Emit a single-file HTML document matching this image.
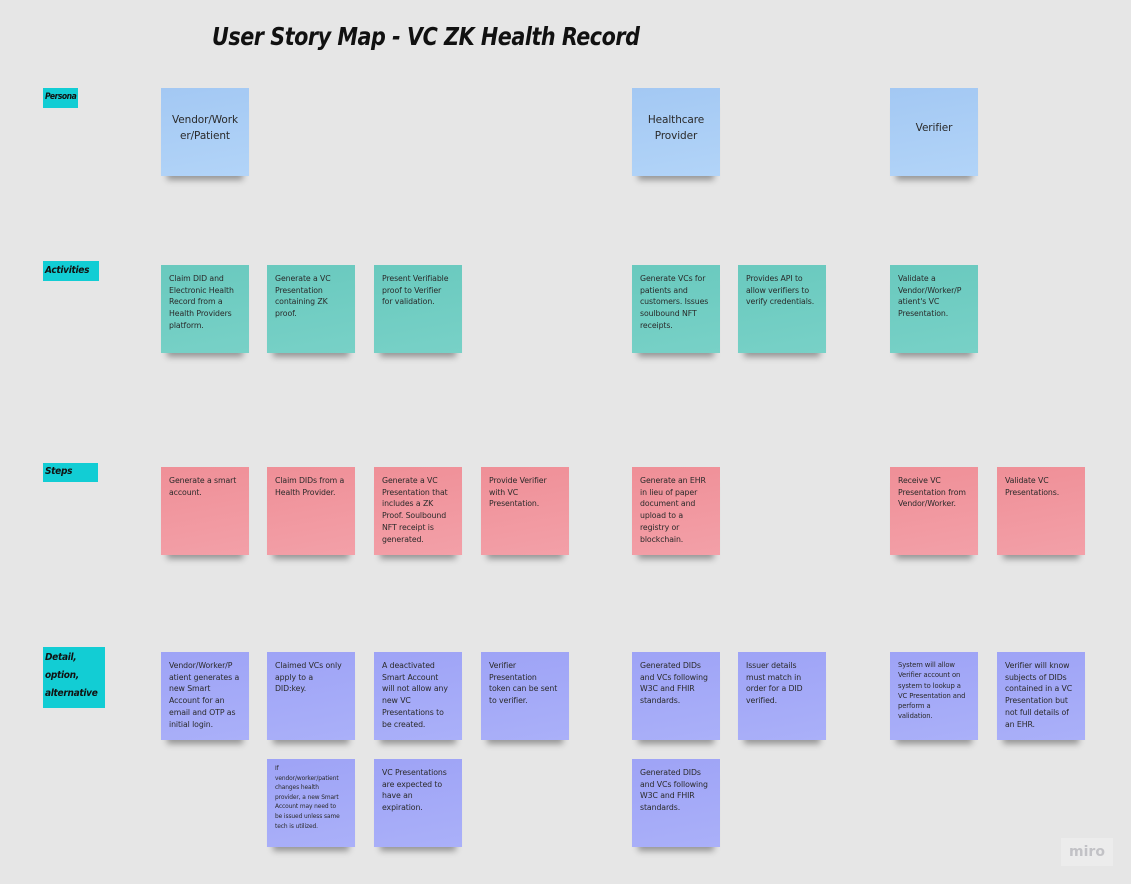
<!DOCTYPE html>
<html><head><meta charset="utf-8"><style>
body{margin:0;width:1131px;height:884px;background:#e6e6e6;position:relative;overflow:hidden;font-family:"DejaVu Sans","Liberation Sans",sans-serif;}
.n{position:absolute;width:88px;height:88px;box-sizing:border-box;padding:8px 0 0 8px;font-size:7.8px;line-height:11.7px;color:#2a2a2a;box-shadow:0 10px 6px -6px rgba(0,0,0,0.35);white-space:nowrap;letter-spacing:-0.1px;}
.b{background:linear-gradient(170deg,#a3c8f3,#b2d4f8);font-size:10.5px;line-height:16px;text-align:center;display:flex;align-items:center;justify-content:center;padding:0 0 8px;}
.t{background:linear-gradient(170deg,#69c9be,#78d1c7);}
.p{background:linear-gradient(170deg,#ef8f97,#f3a0a8);}
.v{background:linear-gradient(170deg,#9ea3f6,#aab0f9);}
.l{position:absolute;background:#12cdd4;font-style:italic;font-weight:bold;font-size:10px;color:#111;padding:2px 2px;box-sizing:border-box;font-family:"DejaVu Sans Condensed","Liberation Sans",sans-serif;letter-spacing:-0.3px;white-space:nowrap;}
h1{position:absolute;left:212px;top:22px;margin:0;font-size:25px;font-style:italic;font-weight:bold;color:#111;letter-spacing:-0.5px;font-family:"DejaVu Sans Condensed","Liberation Sans",sans-serif;transform:scaleX(0.92);transform-origin:left;}
.miro{position:absolute;left:1061px;top:838px;width:52px;height:28px;background:#ececec;color:#c2c2c6;font-weight:bold;font-size:14px;text-align:center;line-height:28px;}
</style></head><body>
<h1>User Story Map - VC ZK Health Record</h1>
<div class="l" style="left:43px;top:88px;width:35px;height:20px;padding-top:4px;font-size:8.5px;letter-spacing:-0.5px">Persona</div>
<div class="l" style="left:43px;top:261px;width:56px;height:20px;padding-top:4px">Activities</div>
<div class="l" style="left:43px;top:463px;width:55px;height:19px;padding-top:3px">Steps</div>
<div class="l" style="left:43px;top:647px;width:62px;height:61px;line-height:18px;padding-top:2px">Detail,<br>option,<br>alternative</div>

<div class="n b" style="left:161px;top:88px">Vendor/Work<br>er/Patient</div>
<div class="n b" style="left:632px;top:88px">Healthcare<br>Provider</div>
<div class="n b" style="left:890px;top:88px">Verifier</div>

<div class="n t" style="left:161px;top:265px">Claim DID and<br>Electronic Health<br>Record from a<br>Health Providers<br>platform.</div>
<div class="n t" style="left:267px;top:265px">Generate a VC<br>Presentation<br>containing ZK<br>proof.</div>
<div class="n t" style="left:374px;top:265px">Present Verifiable<br>proof to Verifier<br>for validation.</div>
<div class="n t" style="left:632px;top:265px">Generate VCs for<br>patients and<br>customers. Issues<br>soulbound NFT<br>receipts.</div>
<div class="n t" style="left:738px;top:265px">Provides API to<br>allow verifiers to<br>verify credentials.</div>
<div class="n t" style="left:890px;top:265px">Validate a<br>Vendor/Worker/P<br>atient's VC<br>Presentation.</div>

<div class="n p" style="left:161px;top:467px">Generate a smart<br>account.</div>
<div class="n p" style="left:267px;top:467px">Claim DIDs from a<br>Health Provider.</div>
<div class="n p" style="left:374px;top:467px">Generate a VC<br>Presentation that<br>includes a ZK<br>Proof. Soulbound<br>NFT receipt is<br>generated.</div>
<div class="n p" style="left:481px;top:467px">Provide Verifier<br>with VC<br>Presentation.</div>
<div class="n p" style="left:632px;top:467px">Generate an EHR<br>in lieu of paper<br>document and<br>upload to a<br>registry or<br>blockchain.</div>
<div class="n p" style="left:890px;top:467px">Receive VC<br>Presentation from<br>Vendor/Worker.</div>
<div class="n p" style="left:997px;top:467px">Validate VC<br>Presentations.</div>

<div class="n v" style="left:161px;top:652px">Vendor/Worker/P<br>atient generates a<br>new Smart<br>Account for an<br>email and OTP as<br>initial login.</div>
<div class="n v" style="left:267px;top:652px">Claimed VCs only<br>apply to a<br>DID:key.</div>
<div class="n v" style="left:374px;top:652px">A deactivated<br>Smart Account<br>will not allow any<br>new VC<br>Presentations to<br>be created.</div>
<div class="n v" style="left:481px;top:652px">Verifier<br>Presentation<br>token can be sent<br>to verifier.</div>
<div class="n v" style="left:632px;top:652px">Generated DIDs<br>and VCs following<br>W3C and FHIR<br>standards.</div>
<div class="n v" style="left:738px;top:652px">Issuer details<br>must match in<br>order for a DID<br>verified.</div>
<div class="n v" style="left:890px;top:652px;font-size:6.8px;line-height:10.3px">System will allow<br>Verifier account on<br>system to lookup a<br>VC Presentation and<br>perform a<br>validation.</div>
<div class="n v" style="left:997px;top:652px">Verifier will know<br>subjects of DIDs<br>contained in a VC<br>Presentation but<br>not full details of<br>an EHR.</div>
<div class="n v" style="left:267px;top:759px;font-size:5.9px;line-height:9.6px;padding-top:6px">If<br>vendor/worker/patient<br>changes health<br>provider, a new Smart<br>Account may need to<br>be issued unless same<br>tech is utilized.</div>
<div class="n v" style="left:374px;top:759px">VC Presentations<br>are expected to<br>have an<br>expiration.</div>
<div class="n v" style="left:632px;top:759px">Generated DIDs<br>and VCs following<br>W3C and FHIR<br>standards.</div>
<div class="miro">miro</div>
</body></html>
